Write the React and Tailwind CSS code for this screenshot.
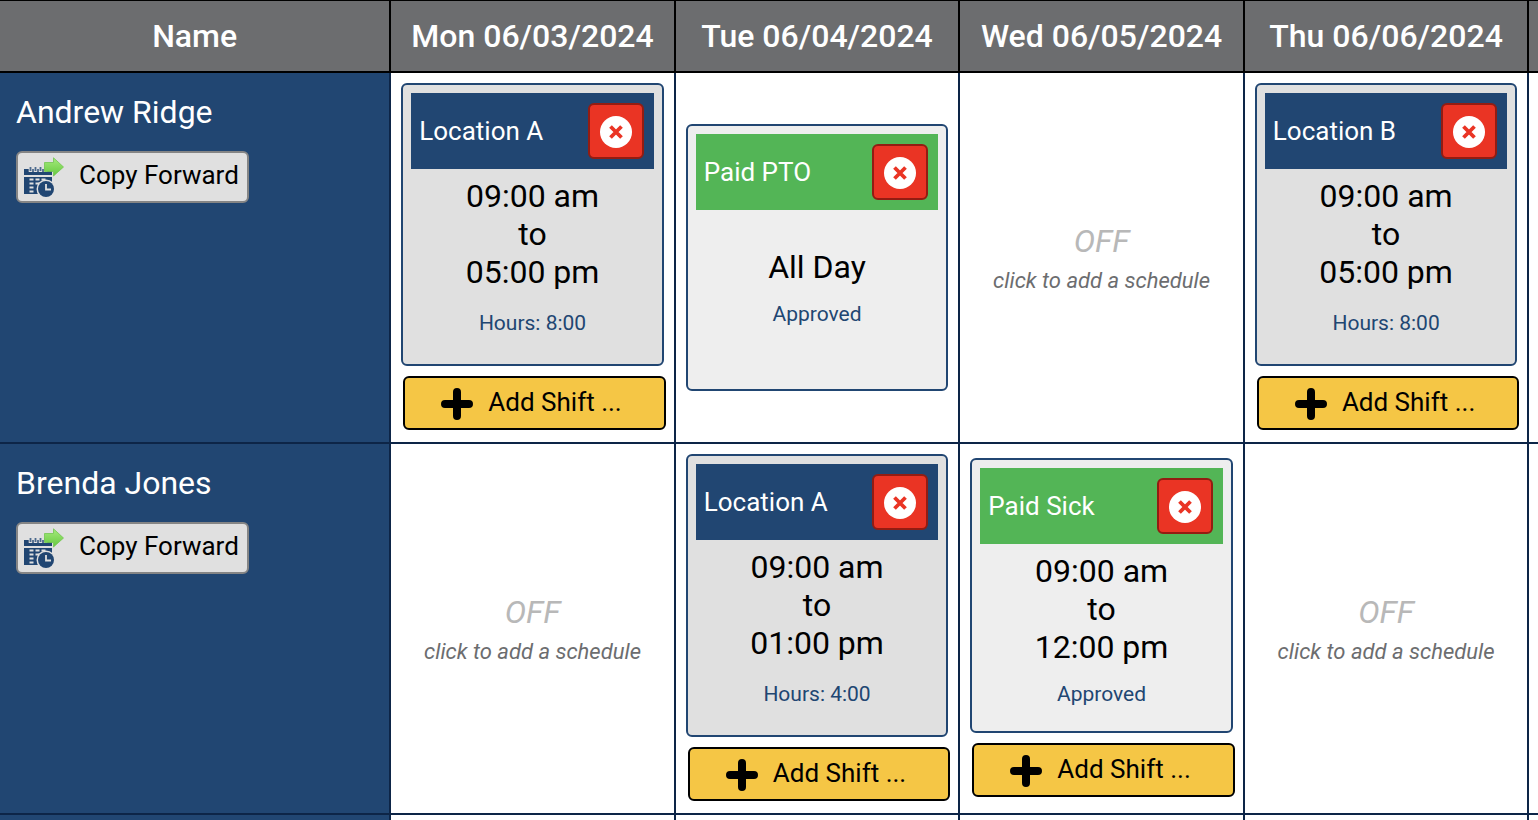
import React from "react";

const DAYS = ["Mon 06/03/2024", "Tue 06/04/2024", "Wed 06/05/2024", "Thu 06/06/2024"];

const shift = (title, from, to, hours) => ({ kind: "shift", title, lines: [from, "to", to], note: `Hours: ${hours}` });

const EMPLOYEES = [
  {
    name: "Andrew Ridge",
    cells: [
      shift("Location A", "09:00 am", "05:00 pm", "8:00"),
      { kind: "allDay", title: "Paid PTO", lines: ["All Day"], note: "Approved" },
      null,
      shift("Location B", "09:00 am", "05:00 pm", "8:00"),
    ],
  },
  {
    name: "Brenda Jones",
    cells: [
      null,
      shift("Location A", "09:00 am", "01:00 pm", "4:00"),
      { kind: "leave", title: "Paid Sick", lines: ["09:00 am", "to", "12:00 pm"], note: "Approved" },
      null,
    ],
  },
];

const CARD = {
  shift: { box: "bg-[#e0e0e0]", head: "bg-[#214672]", body: "pt-2", note: "py-5" },
  leave: { box: "bg-[#eeeeee]", head: "bg-[#53b556]", body: "pt-2", note: "py-4" },
  allDay: { box: "bg-[#eeeeee]", head: "bg-[#53b556]", body: "py-[38px]", note: "py-4" },
};

function CopyIcon() {
  return (
    <svg width="40" height="40" viewBox="0 0 40 40" aria-hidden="true" className="shrink-0">
      <defs>
        <linearGradient id="arrow" x1="0" y1="0" x2="0" y2="1">
          <stop offset="0" stopColor="#a5ea7c" />
          <stop offset="1" stopColor="#66c93f" />
        </linearGradient>
      </defs>
      <path d="M0 12H28V18H0Z M0 20H28V37H0Z" fill="#214672" />
      <path d="M6.500 10v5M11.500 10v5M16.500 10v5M21.500 10v5" stroke="#e0e0e0" strokeWidth="3.600" />
      <path d="M6.500 10v4M11.500 10v4M16.500 10v4M21.500 10v4" stroke="#4c6a8e" strokeWidth="1.800" />
      <path d="M5.500 22.500h4M11.500 22.500h4M17.500 22.500h4M5.500 26.500h4M11.500 26.500h4M5.500 30.500h4M5.500 34.500h4" stroke="#e0e0e0" strokeWidth="2.200" />
      <circle cx="22" cy="32" r="9.500" fill="#e0e0e0" />
      <circle cx="22" cy="32" r="8" fill="#214672" />
      <path d="M22 27v5.500h5" fill="none" stroke="#e0e0e0" strokeWidth="1.800" />
      <path d="M20.500 5.500H29.500V0.800L39.500 10L29.500 19V14.500H20.500Z" fill="url(#arrow)" stroke="#72c750" strokeWidth="0.800" />
    </svg>
  );
}

function RemoveButton({ title }) {
  return (
    <button
      type="button"
      aria-label={`Remove ${title}`}
      className="flex size-14 shrink-0 items-center justify-center rounded-md border-2 border-[#931c12] bg-[#ea3424] pt-0.5"
    >
      <svg width="32" height="32" viewBox="0 0 32 32" aria-hidden="true">
        <circle cx="16" cy="16" r="16" fill="#fff" />
        <path d="M10.500 10.500L21.500 21.500M21.500 10.500L10.500 21.500" stroke="#ea3424" strokeWidth="3.800" />
      </svg>
    </button>
  );
}

function AddShiftButton() {
  return (
    <button
      type="button"
      className="mt-2.5 mb-0.5 ml-0.5 -mr-0.5 flex h-[54px] items-center justify-center gap-[15px] rounded-md border-2 border-black bg-[#f5c645] pr-1.5 text-[26px] leading-[30px] text-black"
    >
      <svg width="32" height="32" viewBox="0 0 32 32" aria-hidden="true" className="mt-0.5">
        <path d="M16 4V28M4 16H28" stroke="#000" strokeWidth="8" strokeLinecap="round" />
      </svg>
      <span className="pb-0.5">Add Shift ...</span>
    </button>
  );
}

function ScheduleCell({ entry }) {
  if (!entry) {
    return (
      <button type="button" className="flex w-full flex-col items-center gap-2 italic">
        <span className="text-[32px] leading-[38px] text-[#b8b8b8]">OFF</span>
        <span className="text-[22px] leading-[25px] text-[#6c6d6f]">click to add a schedule</span>
      </button>
    );
  }
  const style = CARD[entry.kind];
  return (
    <div className="flex flex-col">
      <article className={`rounded-md border-2 border-[#214672] p-2 text-center ${style.box}`}>
        <header className={`flex items-center justify-between py-2.5 pr-2.5 pl-2 text-[26px] leading-[30px] text-white ${style.head}`}>
          <h3>{entry.title}</h3>
          <RemoveButton title={entry.title} />
        </header>
        <div className={style.body}>
          {entry.lines.map((line) => (
            <p key={line} className="text-[32px] leading-[38px] text-black">{line}</p>
          ))}
          <p className={`text-[21px] leading-[25px] text-[#214672] ${style.note}`}>{entry.note}</p>
        </div>
      </article>
      {entry.kind !== "allDay" && <AddShiftButton />}
    </div>
  );
}

export default function App() {
  const headCell = "h-[73px] border-t border-r-2 border-b-2 border-black bg-[#6c6d6f] p-0 text-[32px] leading-[38px] font-medium text-white";
  const bodyBorder = "border-r-2 border-b-2 border-[#0d2547]";
  return (
    <main className="h-screen overflow-hidden bg-white font-['Roboto',sans-serif]">
      <table className="w-full table-fixed border-separate border-spacing-0">
        <colgroup>
          <col className="w-[25.44%]" />
          {DAYS.map((day) => (
            <col key={day} className="w-[18.5%]" />
          ))}
          <col />
        </colgroup>
        <thead>
          <tr>
            <th scope="col" className={headCell}>Name</th>
            {DAYS.map((day) => (
              <th key={day} scope="col" className={headCell}>{day}</th>
            ))}
            <td className="border-t border-b-2 border-black bg-[#6c6d6f] p-0" />
          </tr>
        </thead>
        <tbody>
          {EMPLOYEES.map((person) => (
            <tr key={person.name}>
              <th scope="row" className={`bg-[#214672] px-4 py-5 text-left align-top font-normal ${bodyBorder}`}>
                <div className="text-[32px] leading-[38px] text-white">{person.name}</div>
                <button
                  type="button"
                  className="mt-5 flex h-[52px] items-center gap-[15px] rounded-md border-2 border-[#858585] bg-[#e0e0e0] pr-2 pl-1.5 text-[26px] leading-[30px] whitespace-nowrap text-black"
                >
                  <CopyIcon />
                  <span className="pb-1">Copy Forward</span>
                </button>
              </th>
              {person.cells.map((entry, i) => (
                <td key={DAYS[i]} className={`h-[371px] p-2.5 align-middle ${bodyBorder}`}>
                  <ScheduleCell entry={entry} />
                </td>
              ))}
              <td className="border-b-2 border-[#0d2547] p-0" />
            </tr>
          ))}
          <tr>
            <td className="h-20 border-r-2 border-[#0d2547] bg-[#214672]" />
            {DAYS.map((day) => (
              <td key={day} className="border-r-2 border-[#0d2547]" />
            ))}
            <td />
          </tr>
        </tbody>
      </table>
    </main>
  );
}
